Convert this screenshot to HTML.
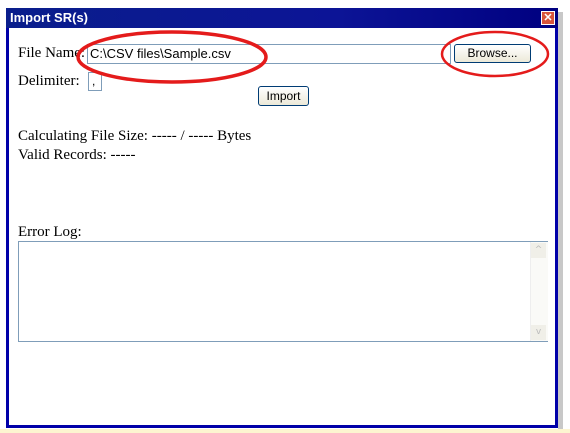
<!DOCTYPE html><html><head><style>
body{margin:0;width:570px;height:433px;position:relative;overflow:hidden;background:#fff;font-family:"Liberation Serif",serif;font-size:15px}
.a{position:absolute}
.btn{position:absolute;border:1px solid #003c74;border-radius:3px;background:linear-gradient(#fff,#ece9d8);font:12px "Liberation Sans",sans-serif;text-align:center;box-sizing:border-box}
</style></head><body>
<div class="a" style="left:0;top:429px;width:570px;height:4px;background:#fdf5d0"></div>
<div class="a" style="left:558px;top:12px;width:5px;height:417px;background:#c8c8c8"></div>
<div class="a" style="left:6px;top:8px;width:552px;height:420px;box-sizing:border-box;border:3px solid #0000a8;border-top:0;background:#fff"></div>
<div class="a" style="left:6px;top:8px;width:552px;height:20px;background:linear-gradient(90deg,#0a1e8c,#0c1496 60%,#000080);color:#fff;font:bold 13px 'Liberation Sans',sans-serif;line-height:20px;padding-left:4px;box-sizing:border-box">Import SR(s)</div>
<div class="a" style="left:541px;top:11px;width:14px;height:14px;background:#d9553a;border:1px solid #fff;box-sizing:border-box;color:#fff;font:bold 11px 'Liberation Sans';line-height:12px;text-align:center">✕</div>
<div class="a" style="left:18px;top:45px">File Name:</div>
<div class="a" style="left:87px;top:44px;width:364px;height:20px;border:1px solid #7f9db9;box-sizing:border-box;font:13px 'Liberation Sans',sans-serif;line-height:18px;padding-left:2px;background:#fff">C:\CSV files\Sample.csv</div>
<div class="btn" style="left:454px;top:44px;width:77px;height:19px;line-height:17px">Browse...</div>
<div class="a" style="left:18px;top:73px">Delimiter:</div>
<div class="a" style="left:88px;top:72px;width:14px;height:19px;border:1px solid #7f9db9;box-sizing:border-box;font:12px 'Liberation Sans';padding-left:3px;line-height:17px">,</div>
<div class="btn" style="left:258px;top:86px;width:51px;height:20px;line-height:18px">Import</div>
<div class="a" style="left:18px;top:128px">Calculating File Size: ----- / ----- Bytes</div>
<div class="a" style="left:18px;top:147px">Valid Records: -----</div>
<div class="a" style="left:18px;top:224px">Error Log:</div>
<div class="a" style="left:18px;top:241px;width:530px;height:101px;border:1px solid #7f9db9;box-sizing:border-box"></div>
<div class="a" style="left:530px;top:242px;width:17px;height:99px;background:#fafaf7;border-left:1px solid #eee"></div>
<div class="a" style="left:531px;top:243px;width:15px;height:15px;background:#f0efe8;color:#bbb;font:9px 'DejaVu Sans';text-align:center;line-height:15px">^</div>
<div class="a" style="left:531px;top:325px;width:15px;height:15px;background:#f0efe8;color:#bbb;font:9px 'DejaVu Sans';text-align:center;line-height:15px">v</div>
<svg class="a" style="left:0;top:0" width="570" height="433"><ellipse cx="172" cy="57" rx="94" ry="25" fill="none" stroke="#e41b1b" stroke-width="3.5"/><ellipse cx="495" cy="54" rx="53" ry="22" fill="none" stroke="#e41b1b" stroke-width="2.5"/></svg>
</body></html>
